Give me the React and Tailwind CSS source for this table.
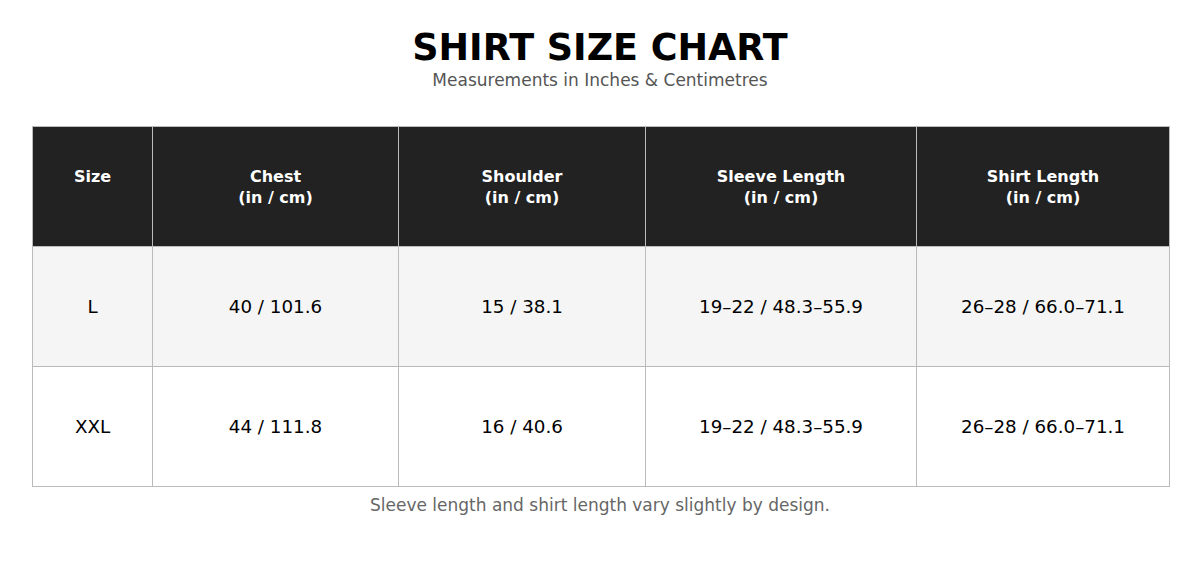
import React from 'react'

const columns = [
  { label: 'Size', unit: false, width: 'w-[120px]' },
  { label: 'Chest', unit: true, width: 'w-[246px]' },
  { label: 'Shoulder', unit: true, width: 'w-[247px]' },
  { label: 'Sleeve Length', unit: true, width: 'w-[271px]' },
  { label: 'Shirt Length', unit: true, width: 'w-[253px]' },
]

const rows = [
  { size: 'L', chest: '40 / 101.6', shoulder: '15 / 38.1', sleeve: '19–22 / 48.3–55.9', length: '26–28 / 66.0–71.1' },
  { size: 'XXL', chest: '44 / 111.8', shoulder: '16 / 40.6', sleeve: '19–22 / 48.3–55.9', length: '26–28 / 66.0–71.1' },
]

export default function App() {
  return (
    <div className="w-[1200px] h-[568px] bg-white px-8 pt-[26px] font-['DejaVu_Sans',sans-serif]">
      <h1 className="text-center text-[36.5px] leading-[44px] font-bold text-black">SHIRT SIZE CHART</h1>
      <p className="text-center text-[17px] leading-[20px] text-[#555]">Measurements in Inches &amp; Centimetres</p>

      <table className="mt-[36px] w-full table-fixed border-collapse border border-[#bbb]">
        <colgroup>
          {columns.map((c) => (
            <col key={c.label} className={c.width} />
          ))}
        </colgroup>
        <thead>
          <tr className="h-[120px] bg-[#222]">
            {columns.map((c) => (
              <th key={c.label} className="border border-[#bbb] text-center text-[16px] leading-[21px] font-bold text-white">
                {c.label}
                <br />
                {c.unit ? '(in / cm)' : '\u00a0'}
              </th>
            ))}
          </tr>
        </thead>
        <tbody>
          {rows.map((r, i) => (
            <tr key={r.size} className={i === 0 ? 'h-[120px] bg-[#f5f5f5]' : 'h-[120px] bg-white'}>
              {[r.size, r.chest, r.shoulder, r.sleeve, r.length].map((v, j) => (
                <td key={j} className="border border-[#bbb] text-center text-[18.3px] text-black">
                  {v}
                </td>
              ))}
            </tr>
          ))}
        </tbody>
      </table>

      <p className="mt-[7px] text-center text-[17px] leading-[22px] text-[#666]">
        Sleeve length and shirt length vary slightly by design.
      </p>
    </div>
  )
}
